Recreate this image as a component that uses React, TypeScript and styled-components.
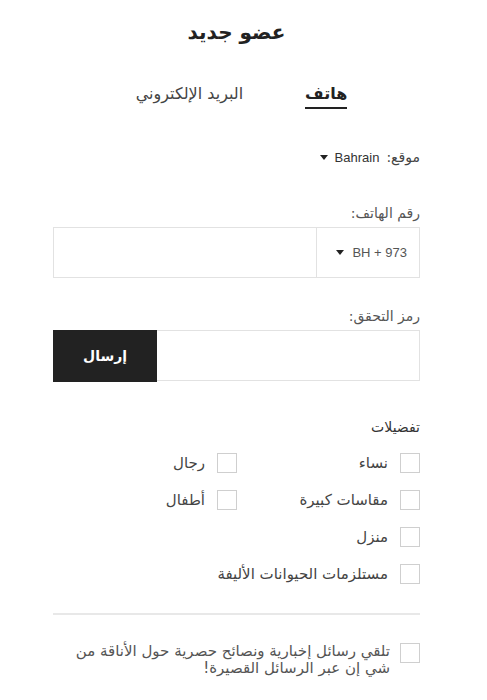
import styled, { createGlobalStyle } from "styled-components";

const GlobalStyle = createGlobalStyle`
  body {
    margin: 0;
    background: #fff;
    font-family: "DejaVu Sans", "Noto Sans", sans-serif;
    color: #333;
  }
`;

const Page = styled.div`
  direction: rtl;
  width: 367px;
  margin-left: 53px;
  padding-top: 20px;
`;

const Title = styled.h1`
  margin: 0;
  text-align: center;
  font-size: 20px;
  font-weight: bold;
  color: #222;
`;

const Tabs = styled.div`
  display: flex;
  justify-content: center;
  gap: 62px;
  margin-top: 40px;
  padding-left: 10px;
`;

const Tab = styled.div<{ $active?: boolean }>`
  font-size: 16px;
  font-weight: ${(p) => (p.$active ? "bold" : "normal")};
  color: ${(p) => (p.$active ? "#222" : "#444")};
  padding-bottom: 4px;
  border-bottom: 2px solid ${(p) => (p.$active ? "#222" : "transparent")};
`;

const LocationRow = styled.div`
  display: flex;
  align-items: center;
  gap: 7px;
  margin-top: 40px;
  font-size: 14px;
  color: #444;
`;

const Latin = styled.span`
  font-family: "Liberation Sans", sans-serif;
  font-size: 13px;
  color: #333;
`;

const Caret = styled.span`
  display: inline-block;
  width: 0;
  height: 0;
  border-left: 4px solid transparent;
  border-right: 4px solid transparent;
  border-top: 5px solid #222;
`;

const Label = styled.div<{ $top: number }>`
  margin-top: ${(p) => p.$top}px;
  margin-bottom: 6px;
  font-size: 14px;
  color: #555;
`;

const InputBox = styled.div`
  display: flex;
  height: 51px;
  border: 1px solid #e2e2e2;
  box-sizing: border-box;
`;

const CodeSelect = styled.div`
  display: flex;
  align-items: center;
  gap: 8px;
  width: 103px;
  padding-right: 12px;
  box-sizing: border-box;
  border-left: 1px solid #e2e2e2;
  font-family: "Liberation Sans", sans-serif;
  font-size: 13px;
  color: #555;
`;

const SendButton = styled.button`
  margin-right: auto;
  width: 104px;
  height: 52px;
  margin-top: -1px;
  margin-left: -1px;
  background: #222;
  color: #fff;
  border: 0;
  font-family: inherit;
  font-size: 14px;
  font-weight: bold;
`;

const SectionTitle = styled.div`
  margin-top: 38px;
  font-size: 14px;
  color: #333;
`;

const PrefGrid = styled.div`
  display: grid;
  grid-template-columns: 183px 184px;
  row-gap: 17px;
  margin-top: 18px;
`;

const CheckRow = styled.label<{ $full?: boolean }>`
  display: flex;
  align-items: center;
  gap: 12px;
  font-size: 15px;
  color: #444;
  grid-column: ${(p) => (p.$full ? "1 / -1" : "auto")};
`;

const Box = styled.span`
  flex: none;
  width: 18px;
  height: 18px;
  border: 1px solid #cfcfcf;
`;

const Divider = styled.hr`
  margin: 29px 0 0;
  border: 0;
  border-top: 2px solid #e8e8e8;
`;

const NewsRow = styled.label`
  display: flex;
  align-items: flex-start;
  gap: 10px;
  margin-top: 28px;
  font-size: 15px;
  line-height: 17px;
  color: #555;
`;

const App = () => {
  return (
    <>
      <GlobalStyle />
      <Page>
        <Title>عضو جديد</Title>
        <Tabs>
          <Tab $active>هاتف</Tab>
          <Tab>البريد الإلكتروني</Tab>
        </Tabs>
        <LocationRow>
          <span>موقع:</span>
          <Latin>Bahrain</Latin>
          <Caret />
        </LocationRow>

        <Label $top={40}>رقم الهاتف:</Label>
        <InputBox>
          <CodeSelect>
            <span dir="ltr">BH + 973</span>
            <Caret />
          </CodeSelect>
        </InputBox>

        <Label $top={30}>رمز التحقق:</Label>
        <InputBox>
          <SendButton>إرسال</SendButton>
        </InputBox>

        <SectionTitle>تفضيلات</SectionTitle>
        <PrefGrid>
          <CheckRow>
            <Box />
            نساء
          </CheckRow>
          <CheckRow>
            <Box />
            رجال
          </CheckRow>
          <CheckRow>
            <Box />
            مقاسات كبيرة
          </CheckRow>
          <CheckRow>
            <Box />
            أطفال
          </CheckRow>
          <CheckRow $full>
            <Box />
            منزل
          </CheckRow>
          <CheckRow $full>
            <Box />
            مستلزمات الحيوانات الأليفة
          </CheckRow>
        </PrefGrid>

        <Divider />
        <NewsRow>
          <Box />
          <span>
            تلقي رسائل إخبارية ونصائح حصرية حول الأناقة من
            <br />
            شي إن عبر الرسائل القصيرة!
          </span>
        </NewsRow>
      </Page>
    </>
  );
};

export default App;
